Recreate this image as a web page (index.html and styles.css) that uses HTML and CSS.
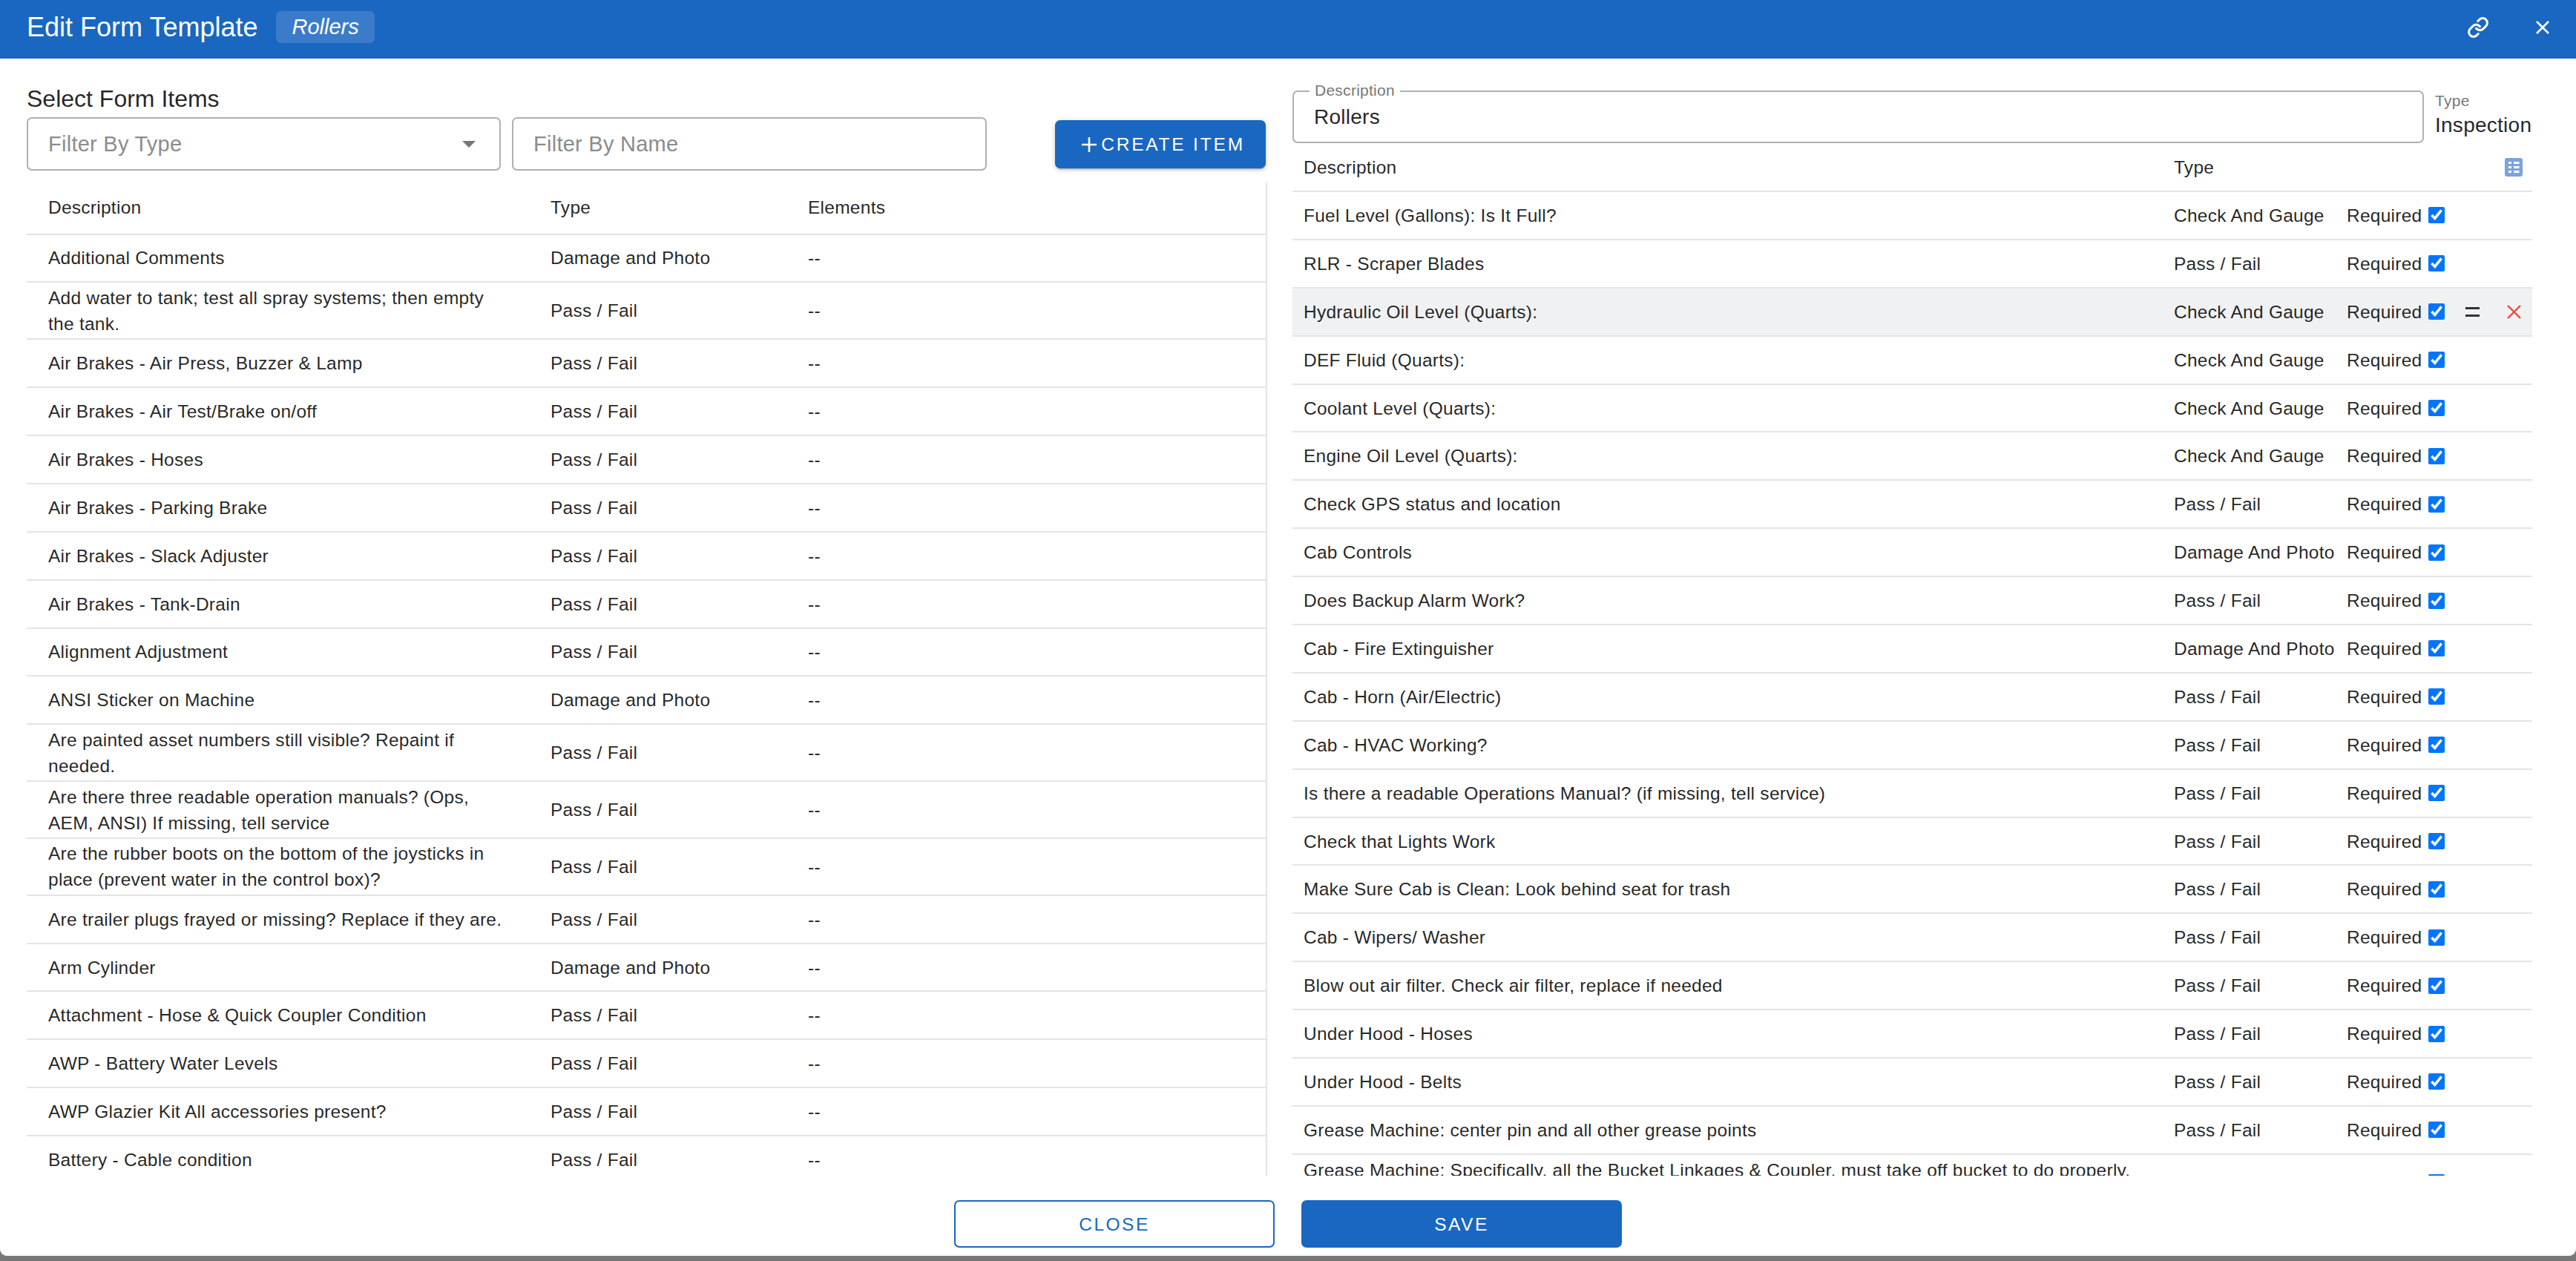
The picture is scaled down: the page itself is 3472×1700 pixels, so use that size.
FILE: index.html

```html
<!DOCTYPE html>
<html lang="en">
<head>
  <meta charset="UTF-8">
  <meta name="viewport" content="width=device-width, initial-scale=1.0">
  <title>Edit Form Template</title>
  <link rel="stylesheet" href="styles.css">
</head>
<body>
  <div class="dialog">
    <header class="topbar">
      <h1 class="topbar-title">Edit Form Template</h1>
      <span class="topbar-chip">Rollers</span>
      <svg class="icon-link" viewBox="0 0 24 24" fill="none" stroke="#fff" stroke-width="2.4" stroke-linecap="round" stroke-linejoin="round">
        <path d="M10 13a5 5 0 0 0 7.54.54l3-3a5 5 0 0 0-7.07-7.07l-1.72 1.71"/>
        <path d="M14 11a5 5 0 0 0-7.54-.54l-3 3a5 5 0 0 0 7.07 7.07l1.71-1.71"/>
      </svg>
      <svg class="icon-close" viewBox="0 0 20 20" fill="none" stroke="#fff" stroke-width="2.6">
        <path d="M2 2l16 16M18 2L2 18"/>
      </svg>
    </header>

    <main class="panels">
      <!-- left side: items to choose from -->
      <section class="picker">
        <h2 class="picker-title">Select Form Items</h2>
        <div class="filters">
          <div class="filter filter-type">
            <span class="placeholder">Filter By Type</span>
            <span class="caret"></span>
          </div>
          <div class="filter filter-name">
            <span class="placeholder">Filter By Name</span>
          </div>
          <button class="btn-create">
            <svg class="icon-plus" viewBox="0 0 20 20" fill="none" stroke="#fff" stroke-width="2.6"><path d="M10 0v20M0 10h20"/></svg>
            CREATE ITEM
          </button>
        </div>
        <div class="items-clip">
          <div class="items-card">
            <div class="item item-head"><span>Description</span><span>Type</span><span>Elements</span></div>
            <div class="item"><span>Additional Comments</span><span>Damage and Photo</span><span>--</span></div>
            <div class="item item-tall"><span>Add water to tank; test all spray systems; then empty the tank.</span><span>Pass / Fail</span><span>--</span></div>
            <div class="item"><span>Air Brakes - Air Press, Buzzer &amp; Lamp</span><span>Pass / Fail</span><span>--</span></div>
            <div class="item"><span>Air Brakes - Air Test/Brake on/off</span><span>Pass / Fail</span><span>--</span></div>
            <div class="item"><span>Air Brakes - Hoses</span><span>Pass / Fail</span><span>--</span></div>
            <div class="item"><span>Air Brakes - Parking Brake</span><span>Pass / Fail</span><span>--</span></div>
            <div class="item"><span>Air Brakes - Slack Adjuster</span><span>Pass / Fail</span><span>--</span></div>
            <div class="item"><span>Air Brakes - Tank-Drain</span><span>Pass / Fail</span><span>--</span></div>
            <div class="item"><span>Alignment Adjustment</span><span>Pass / Fail</span><span>--</span></div>
            <div class="item"><span>ANSI Sticker on Machine</span><span>Damage and Photo</span><span>--</span></div>
            <div class="item item-tall"><span>Are painted asset numbers still visible? Repaint if needed.</span><span>Pass / Fail</span><span>--</span></div>
            <div class="item item-tall"><span>Are there three readable operation manuals? (Ops, AEM, ANSI) If missing, tell service</span><span>Pass / Fail</span><span>--</span></div>
            <div class="item item-tall"><span>Are the rubber boots on the bottom of the joysticks in place (prevent water in the control box)?</span><span>Pass / Fail</span><span>--</span></div>
            <div class="item"><span>Are trailer plugs frayed or missing? Replace if they are.</span><span>Pass / Fail</span><span>--</span></div>
            <div class="item"><span>Arm Cylinder</span><span>Damage and Photo</span><span>--</span></div>
            <div class="item"><span>Attachment - Hose &amp; Quick Coupler Condition</span><span>Pass / Fail</span><span>--</span></div>
            <div class="item"><span>AWP - Battery Water Levels</span><span>Pass / Fail</span><span>--</span></div>
            <div class="item"><span>AWP Glazier Kit All accessories present?</span><span>Pass / Fail</span><span>--</span></div>
            <div class="item"><span>Battery - Cable condition</span><span>Pass / Fail</span><span>--</span></div>
          </div>
        </div>
      </section>

      <!-- right side: the template itself -->
      <section class="template">
        <div class="template-top">
          <div class="field">
            <span class="field-label">Description</span>
            <span class="field-value">Rollers</span>
          </div>
          <div class="type-box">
            <span class="type-label">Type</span>
            <span class="type-value">Inspection</span>
          </div>
        </div>
        <div class="line line-head">
          <span>Description</span><span>Type</span><span></span><span></span>
          <svg class="icon-list" viewBox="0 0 24 25">
            <rect width="24" height="25" rx="3" fill="#7ba3dc"/>
            <path d="M5 5h4v3H5zM5 11h4v3H5zM5 17h4v3H5zM12 5h7.5v3H12zM12 11h7.5v3H12zM12 17h7.5v3H12z" fill="#fff"/>
          </svg>
        </div>
        <div class="line"><span>Fuel Level (Gallons): Is It Full?</span><span>Check And Gauge</span><label class="req">Required <input type="checkbox" checked></label></div>
        <div class="line"><span>RLR - Scraper Blades</span><span>Pass / Fail</span><label class="req">Required <input type="checkbox" checked></label></div>
        <div class="line line-hover">
          <span>Hydraulic Oil Level (Quarts):</span><span>Check And Gauge</span><label class="req">Required <input type="checkbox" checked></label>
          <svg class="icon-drag" viewBox="0 0 19 13" fill="#333"><path d="M0 0h19v3H0zM0 10h19v3H0z"/></svg>
          <svg class="icon-remove" viewBox="0 0 19 19" fill="none" stroke="#f44336" stroke-width="2.4"><path d="M1 1l17 17M18 1L1 18"/></svg>
        </div>
        <div class="line"><span>DEF Fluid (Quarts):</span><span>Check And Gauge</span><label class="req">Required <input type="checkbox" checked></label></div>
        <div class="line"><span>Coolant Level (Quarts):</span><span>Check And Gauge</span><label class="req">Required <input type="checkbox" checked></label></div>
        <div class="line"><span>Engine Oil Level (Quarts):</span><span>Check And Gauge</span><label class="req">Required <input type="checkbox" checked></label></div>
        <div class="line"><span>Check GPS status and location</span><span>Pass / Fail</span><label class="req">Required <input type="checkbox" checked></label></div>
        <div class="line"><span>Cab Controls</span><span>Damage And Photo</span><label class="req">Required <input type="checkbox" checked></label></div>
        <div class="line"><span>Does Backup Alarm Work?</span><span>Pass / Fail</span><label class="req">Required <input type="checkbox" checked></label></div>
        <div class="line"><span>Cab - Fire Extinguisher</span><span>Damage And Photo</span><label class="req">Required <input type="checkbox" checked></label></div>
        <div class="line"><span>Cab - Horn (Air/Electric)</span><span>Pass / Fail</span><label class="req">Required <input type="checkbox" checked></label></div>
        <div class="line"><span>Cab - HVAC Working?</span><span>Pass / Fail</span><label class="req">Required <input type="checkbox" checked></label></div>
        <div class="line"><span>Is there a readable Operations Manual? (if missing, tell service)</span><span>Pass / Fail</span><label class="req">Required <input type="checkbox" checked></label></div>
        <div class="line"><span>Check that Lights Work</span><span>Pass / Fail</span><label class="req">Required <input type="checkbox" checked></label></div>
        <div class="line"><span>Make Sure Cab is Clean: Look behind seat for trash</span><span>Pass / Fail</span><label class="req">Required <input type="checkbox" checked></label></div>
        <div class="line"><span>Cab - Wipers/ Washer</span><span>Pass / Fail</span><label class="req">Required <input type="checkbox" checked></label></div>
        <div class="line"><span>Blow out air filter. Check air filter, replace if needed</span><span>Pass / Fail</span><label class="req">Required <input type="checkbox" checked></label></div>
        <div class="line"><span>Under Hood - Hoses</span><span>Pass / Fail</span><label class="req">Required <input type="checkbox" checked></label></div>
        <div class="line"><span>Under Hood - Belts</span><span>Pass / Fail</span><label class="req">Required <input type="checkbox" checked></label></div>
        <div class="line"><span>Grease Machine: center pin and all other grease points</span><span>Pass / Fail</span><label class="req">Required <input type="checkbox" checked></label></div>
        <div class="line line-tall"><span class="line-top">Grease Machine: Specifically, all the Bucket Linkages &amp; Coupler, must take off bucket to do properly.</span><span>Pass / Fail</span><label class="req">Required <input type="checkbox" checked></label></div>
      </section>
    </main>

    <footer class="actions">
      <button class="btn btn-close">CLOSE</button>
      <button class="btn btn-save">SAVE</button>
    </footer>
  </div>
</body>
</html>
```

FILE: styles.css

```css
/* General Styling */
* {
  box-sizing: border-box;
}

html, body {
  margin: 0;
  height: 100%;
}

body {
  height: 1700px;
  overflow: hidden;
  background-color: #787878;
  font-family: "Liberation Sans", Arial, sans-serif;
  font-size: 24.5px;
  letter-spacing: 0.26px;
  line-height: 35px;
  color: rgba(0, 0, 0, 0.87);
}

.dialog {
  display: flex;
  flex-direction: column;
  height: 1693px;
  background-color: #fff;
  border-radius: 0 0 9px 9px;
  overflow: hidden;
}

/* Top bar */
.topbar {
  flex: none;
  display: flex;
  align-items: center;
  height: 79px;
  padding: 0 35px 6px 36px;
  background-color: #1a67c1;
  color: #fff;
}

.topbar-title {
  margin: 0;
  font-size: 36px;
  font-weight: 400;
  letter-spacing: 0;
}

.topbar-chip {
  margin-left: 25px;
  padding: 0 21px;
  height: 43px;
  line-height: 43px;
  border-radius: 7px;
  background-color: rgba(255, 255, 255, 0.14);
  font-size: 29px;
  font-style: italic;
  letter-spacing: 0;
}

.icon-link {
  width: 30px;
  height: 30px;
  margin-left: auto;
}

.icon-close {
  width: 20px;
  height: 20px;
  margin-left: 62px;
}

/* Two panels */
.panels {
  flex: 1;
  min-height: 0;
  display: flex;
  padding: 0 59px 0 36px;
  gap: 36px;
  overflow: hidden;
}

.picker {
  flex: none;
  width: 1670px;
  display: flex;
  flex-direction: column;
}

.picker-title {
  margin: 36px 0 7px;
  font-size: 32px;
  font-weight: 400;
  line-height: 36px;
  letter-spacing: 0;
}

.filters {
  flex: none;
  display: flex;
  height: 72px;
  gap: 15px;
}

.filter {
  display: flex;
  align-items: center;
  justify-content: space-between;
  height: 72px;
  padding: 0 32px 0 27px;
  border: 2px solid #b0b0b0;
  border-radius: 7px;
  font-size: 29px;
}

.filter-type {
  width: 639px;
}

.filter-name {
  width: 640px;
}

.placeholder {
  color: #8c8c8c;
}

.caret {
  width: 0;
  height: 0;
  border-left: 9px solid transparent;
  border-right: 9px solid transparent;
  border-top: 9px solid #757575;
}

.btn-create {
  display: flex;
  align-items: center;
  justify-content: center;
  gap: 6px;
  width: 284px;
  height: 65px;
  margin: 4px 0 0 auto;
  padding: 0 0 0 8px;
  border: none;
  border-radius: 7px;
  background-color: #1a67c1;
  color: #fff;
  font: inherit;
  letter-spacing: 2.8px;
  box-shadow: 0 3px 2px -2px rgba(0, 0, 0, 0.2), 0 2px 4px rgba(0, 0, 0, 0.14), 0 1px 8px rgba(0, 0, 0, 0.12);
}

.icon-plus {
  width: 20px;
  height: 20px;
}

.items-clip {
  flex: 1;
  min-height: 0;
  margin: 15px -4px 0 0;
  padding-right: 4px;
  overflow: hidden;
}

.items-card {
  box-shadow: 1px 0 3px rgba(0, 0, 0, 0.2);
  background-color: #fff;
}

.item {
  display: grid;
  grid-template-columns: 677px 347px 1fr;
  align-items: center;
  height: 64.9px;
  padding-left: 29px;
  border-bottom: 2px solid #e4e4e4;
}

.item-head {
  height: 71.5px;
}

.item-tall {
  height: 76.8px;
}

.item span:first-child {
  padding-right: 58px;
}

/* Template side */
.template {
  flex: 1;
  min-width: 0;
  padding-top: 43px;
}

.template-top {
  display: flex;
  height: 71px;
}

.field {
  position: relative;
  flex: 1;
  display: flex;
  align-items: center;
  padding-left: 27px;
  border: 2px solid #b0b0b0;
  border-radius: 7px;
  font-size: 28px;
}

.field-label {
  position: absolute;
  top: -14px;
  left: 21px;
  padding: 0 7px;
  background-color: #fff;
  color: #777;
  font-size: 21px;
  line-height: 24px;
}

.type-box {
  display: flex;
  flex-direction: column;
  width: 146px;
  padding-left: 15px;
}

.type-label {
  margin-top: 2px;
  color: #777;
  font-size: 21px;
  line-height: 24px;
}

.type-value {
  margin-top: 3px;
  font-size: 28px;
  line-height: 36px;
}

.line {
  display: grid;
  grid-template-columns: 1173px 233px 160px 56px 1fr;
  align-items: center;
  height: 64.9px;
  padding-left: 15px;
  border-bottom: 2px solid #e4e4e4;
}

.line-head {
  height: 66px;
}

.line-hover {
  background-color: #f0f1f3;
}

.line-tall {
  height: 76px;
}

.line-top {
  align-self: start;
  margin-top: 3px;
}

.req {
  display: flex;
  align-items: center;
  gap: 8px;
}

.req input {
  width: 22px;
  height: 22px;
  margin: 0;
}

.icon-list {
  width: 24px;
  height: 25px;
  margin-left: -3px;
}

.icon-drag {
  width: 19px;
  height: 13px;
}

.icon-remove {
  width: 19px;
  height: 19px;
}

/* Footer buttons */
.actions {
  flex: none;
  display: flex;
  justify-content: center;
  gap: 36px;
  height: 108px;
  padding-top: 33px;
}

.btn {
  width: 432px;
  height: 64px;
  border-radius: 7px;
  font: inherit;
  letter-spacing: 2.5px;
}

.btn-close {
  border: 2px solid #1a67c1;
  background-color: #fff;
  color: #1a67c1;
}

.btn-save {
  border: none;
  background-color: #1a67c1;
  color: #fff;
}
```
